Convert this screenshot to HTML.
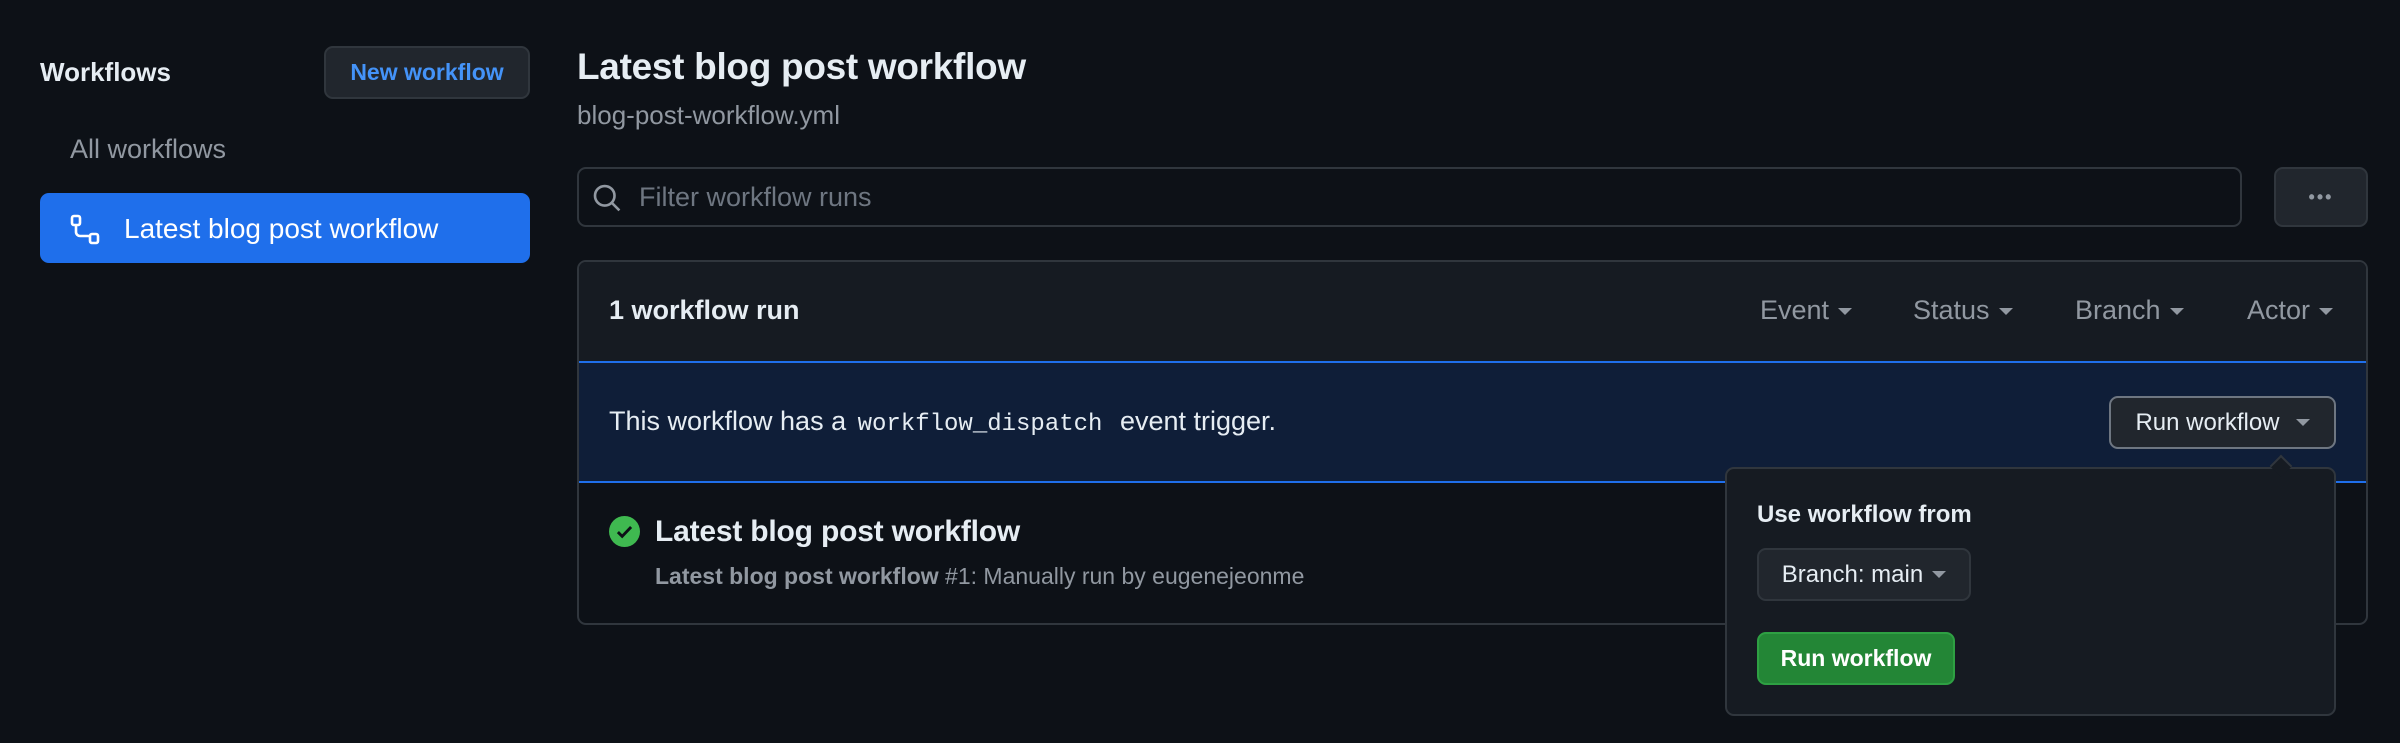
<!DOCTYPE html>
<html><head><meta charset="utf-8"><style>
*{box-sizing:border-box;margin:0;padding:0}
body{width:2400px;height:743px;background:#0d1117;font-family:"Liberation Sans",sans-serif;color:#e6edf3;position:relative;overflow:hidden}
.a{position:absolute;white-space:nowrap}
.btn{position:absolute;border:2px solid #30363d;background:#21262d;border-radius:9px;display:flex;align-items:center;justify-content:center}
.car{display:inline-block;width:0;height:0;border-left:7px solid transparent;border-right:7px solid transparent;border-top:7px solid currentColor;margin-left:9px;vertical-align:middle}
</style></head><body>
<div class="a" style="left:40px;top:57px;font-size:26px;font-weight:bold">Workflows</div>
<div class="btn" style="left:324px;top:46px;width:206px;height:53px;color:#4493f8;font-size:23px;font-weight:bold">New workflow</div>
<div class="a" style="left:70px;top:134px;font-size:27px;color:#9198a1">All workflows</div>
<div class="a" style="left:40px;top:193px;width:490px;height:70px;background:#1f6feb;border-radius:9px"></div>
<svg class="a" style="left:70px;top:214px" width="32" height="32" viewBox="0 0 16 16" fill="none" stroke="#fff" stroke-width="1.3"><rect x="1" y="1" width="4" height="4.5" rx="1"/><rect x="10" y="10" width="4" height="4.5" rx="1"/><path d="M3 5.5v3.5a2 2 0 0 0 2 2h5"/></svg>
<div class="a" style="left:124px;top:213px;font-size:28px;color:#fff">Latest blog post workflow</div>
<div class="a" style="left:577px;top:46px;font-size:37px;font-weight:bold;letter-spacing:-0.3px">Latest blog post workflow</div>
<div class="a" style="left:577px;top:100px;font-size:26px;color:#9198a1">blog-post-workflow.yml</div>
<div class="a" style="left:577px;top:167px;width:1665px;height:60px;border:2px solid #30363d;border-radius:9px;background:#0d1117"></div>
<svg class="a" style="left:592px;top:183px" width="30" height="30" viewBox="0 0 16 16" fill="none" stroke="#9198a1" stroke-width="1.4"><circle cx="6.8" cy="6.8" r="5.2"/><path d="M10.6 10.6l4 4"/></svg>
<div class="a" style="left:639px;top:182px;font-size:27px;color:#6e7681">Filter workflow runs</div>
<div class="btn" style="left:2274px;top:167px;width:94px;height:60px;color:#9198a1;font-size:18px;font-weight:bold;letter-spacing:2px">•••</div>
<div class="a" style="left:577px;top:260px;width:1791px;height:365px;border:2px solid #30363d;border-radius:9px;background:#0d1117;overflow:hidden">
 <div style="height:101px;background:#161b22;border-bottom:2px solid #1f6feb"></div>
 <div style="height:120px;background:#0f1e38;border-bottom:2px solid #1f6feb"></div>
</div>
<div class="a" style="left:609px;top:295px;font-size:27px;font-weight:bold">1 workflow run</div>
<div class="a" style="left:1760px;top:295px;font-size:27px;color:#9198a1">Event<span class="car"></span></div>
<div class="a" style="left:1913px;top:295px;font-size:27px;color:#9198a1">Status<span class="car"></span></div>
<div class="a" style="left:2075px;top:295px;font-size:27px;color:#9198a1">Branch<span class="car"></span></div>
<div class="a" style="left:2247px;top:295px;font-size:27px;color:#9198a1">Actor<span class="car"></span></div>
<div class="a" style="left:609px;top:406px;font-size:27px">This workflow has a <span style="font-family:'Liberation Mono',monospace;font-size:24px;padding:0 10px 0 4px">workflow_dispatch</span> event trigger.</div>
<div class="btn" style="left:2109px;top:396px;width:227px;height:53px;font-size:24px;border-color:#6e7681">Run workflow<span class="car" style="margin-left:16px;color:#9198a1"></span></div>
<svg class="a" style="left:609px;top:516px" width="31" height="31" viewBox="0 0 16 16"><circle cx="8" cy="8" r="8" fill="#3fb950"/><path d="M4.6 8.3l2.2 2.2 4.6-4.8" fill="none" stroke="#0d1117" stroke-width="1.5"/></svg>
<div class="a" style="left:655px;top:515px;font-size:30px;font-weight:bold;letter-spacing:-0.2px">Latest blog post workflow</div>
<div class="a" style="left:655px;top:563px;font-size:23px;color:#9198a1"><b>Latest blog post workflow</b> #1: Manually run by eugenejeonme</div>
<div class="a" style="left:1725px;top:467px;width:611px;height:249px;background:#161b22;border:2px solid #30363d;border-radius:9px"></div>
<div class="a" style="left:2273px;top:458px;width:16px;height:16px;background:#161b22;border-left:2px solid #30363d;border-top:2px solid #30363d;transform:rotate(45deg)"></div>
<div class="a" style="left:1757px;top:501px;font-size:24px;font-weight:bold">Use workflow from</div>
<div class="btn" style="left:1757px;top:548px;width:214px;height:53px;font-size:24px">Branch: main<span class="car" style="color:#9198a1"></span></div>
<div class="btn" style="left:1757px;top:632px;width:198px;height:53px;font-size:23px;font-weight:bold;background:#238636;border-color:#2ea043;color:#fff">Run workflow</div>
</body></html>
